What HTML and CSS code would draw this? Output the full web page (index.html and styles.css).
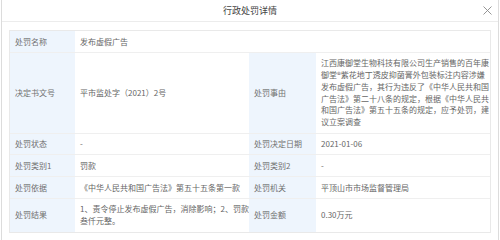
FILE: index.html
```html
<!DOCTYPE html>
<html lang="zh">
<head>
<meta charset="utf-8">
<link rel="stylesheet" href="styles.css">
</head>
<body>
<div class="modal">
  <div class="header">
    <span></span>
    <span class="title">行政处罚详情</span>
    <span class="close"><svg width="9" height="9" viewBox="0 0 9 9"><path d="M0.5 0.5L8.5 8.5M8.5 0.5L0.5 8.5" stroke="#8a8a8a" stroke-width="0.9" fill="none"/></svg></span>
  </div>
  <div class="body">
    <div class="grid">
      <div class="k">处罚名称</div>
      <div class="v span3">发布虚假广告</div>

      <div class="k">决定书文号</div>
      <div class="v">平市监处字（2021）2号</div>
      <div class="k">处罚事由</div>
      <div class="v nowrap">江西康御堂生物科技有限公司生产销售的百年康<br>御堂®紫花地丁透皮抑菌膏外包装标注内容涉嫌<br>发布虚假广告，其行为违反了《中华人民共和国<br>广告法》第二十八条的规定，根据《中华人民共<br>和国广告法》第五十五条的规定，应予处罚，建<br>议立案调查</div>

      <div class="k">处罚状态</div>
      <div class="v">-</div>
      <div class="k">处罚决定日期</div>
      <div class="v">2021-01-06</div>

      <div class="k">处罚类别1</div>
      <div class="v">罚款</div>
      <div class="k">处罚类别2</div>
      <div class="v">-</div>

      <div class="k">处罚依据</div>
      <div class="v">《中华人民共和国广告法》第五十五条第一款</div>
      <div class="k">处罚机关</div>
      <div class="v">平顶山市市场监督管理局</div>

      <div class="k last">处罚结果</div>
      <div class="v last nowrap">1、责令停止发布虚假广告，消除影响；2、罚款<br>叁仟元整。</div>
      <div class="k last">处罚金额</div>
      <div class="v last">0.30万元</div>
    </div>
  </div>
</div>
</body>
</html>
```
FILE: styles.css
```css
html, body {
  margin: 0;
  padding: 0;
  background: #fff;
}
body {
  font-family: "Noto Sans CJK SC", "Noto Sans", sans-serif;
  width: 500px;
  height: 240px;
  overflow: hidden;
}
.modal {
  margin-left: 1px;
  width: 498px;
  height: 240px;
  box-sizing: border-box;
  border-left: 1px solid #dcdcdc;
  border-right: 1px solid #dcdcdc;
  background: #fff;
}
.header {
  height: 21px;
  border-bottom: 1px solid #ececec;
  display: grid;
  grid-template-columns: 1fr auto 1fr;
  align-items: center;
}
.title {
  font-size: 9px;
  color: #444;
  line-height: 12px;
}
.close {
  justify-self: end;
  padding-right: 6px;
  display: flex;
}
.body {
  padding: 8px 6px 0 7px;
}
.grid {
  display: grid;
  grid-template-columns: 65px 174px 67px 174px;
  width: 482px;
  box-sizing: border-box;
  border: 1px solid #e9e9e9;
  font-size: 8px;
  line-height: 11.8px;
  color: #666;
}
.k, .v {
  display: flex;
  align-items: center;
  padding: 4.5px 5px;
  border-bottom: 1px solid #efefef;
  min-width: 0;
}
.k {
  background: #eef5fd;
  color: #707070;
}
.v {
  color: #666;
}
.span3 {
  grid-column: span 3;
}
.nowrap {
  white-space: nowrap;
}
.last {
  border-bottom: none;
}
```
